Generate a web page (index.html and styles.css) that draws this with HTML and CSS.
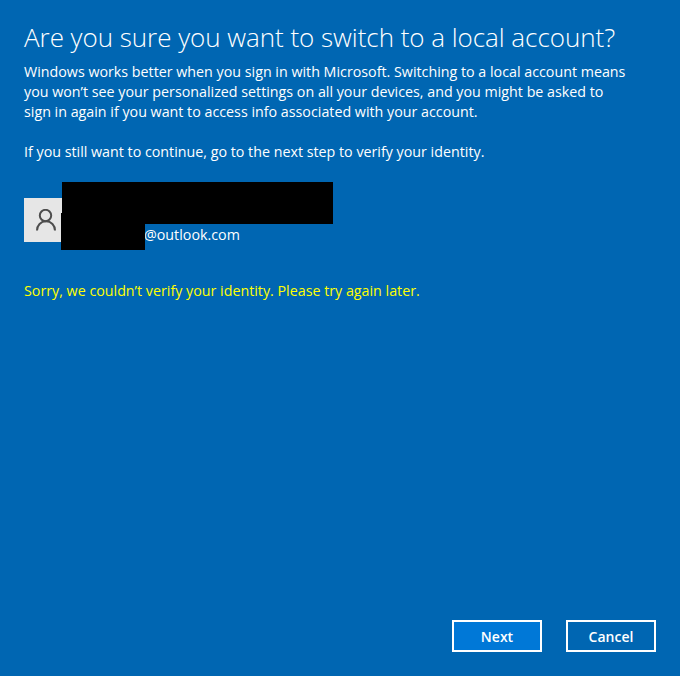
FILE: index.html
```html
<!DOCTYPE html>
<html lang="en">
<head>
<meta charset="utf-8">
<title>Switch to a local account</title>
<link rel="stylesheet" href="styles.css">
</head>
<body>
<main class="page">
  <h1 class="title">Are you sure you want to switch to a local account?</h1>
  <p class="text">Windows works better when you sign in with Microsoft. Switching to a local account means<br>you won’t see your personalized settings on all your devices, and you might be asked to<br>sign in again if you want to access info associated with your account.</p>
  <p class="text next-step">If you still want to continue, go to the next step to verify your identity.</p>
  <div class="account">
    <div class="avatar">
      <svg class="avatar-icon" width="20" height="22" viewBox="0 0 20 22" fill="none" stroke="#4d4d4d" stroke-width="2">
        <circle cx="9.500" cy="6.500" r="5.700"/>
        <path d="M1 21.500c0-5.200 3.800-9.200 9-9.200s9 4 9 9.200"/>
      </svg>
    </div>
    <div class="email">@outlook.com</div>
    <div class="redact redact-name"></div>
    <div class="redact redact-mail"></div>
  </div>
  <p class="error">Sorry, we couldn’t verify your identity. Please try again later.</p>
  <footer class="actions">
    <button class="btn btn-primary" type="button">Next</button>
    <button class="btn" type="button">Cancel</button>
  </footer>
</main>
</body>
</html>
```
FILE: styles.css
```css
* { box-sizing: border-box; }
html, body { margin: 0; height: 100%; }
body { background: #0066b2; color: #fff; font-family: "Open Sans", "Noto Sans", sans-serif; overflow: hidden; }
.page { height: 676px; display: flex; flex-direction: column; padding: 20px 24px 24px; }
.title { margin: 0; font-size: 26px; line-height: 34px; font-weight: 300; letter-spacing: -0.04px; white-space: nowrap; }
.text { margin: 8px 0 0; font-size: 14.28px; line-height: 20px; white-space: nowrap; }
.next-step { margin-top: 20px; }
.account { position: relative; margin-top: 36px; height: 44px; display: flex; }
.avatar { width: 44px; height: 44px; background: #e6e6e6; display: flex; align-items: center; justify-content: center; flex: none; }
.email { margin-left: 76px; margin-top: 27px; font-size: 14.28px; line-height: 20px; }
.redact { position: absolute; background: #000; }
.redact-name { left: 38px; top: -16px; width: 271px; height: 42px; }
.redact-mail { left: 37px; top: 15px; width: 84px; height: 37px; }
.error { margin: 39px 0 0; color: #ffff00; font-size: 14.28px; line-height: 20px; white-space: nowrap; }
.actions { margin-top: auto; display: flex; justify-content: flex-end; gap: 24px; }
.btn { width: 90px; height: 32px; border: 2px solid #fff; background: transparent; color: #fff; font: 600 14px/1 "Open Sans", "Noto Sans", sans-serif; padding: 2px 0 0; }
.btn-primary { background: #0078d7; }
```
